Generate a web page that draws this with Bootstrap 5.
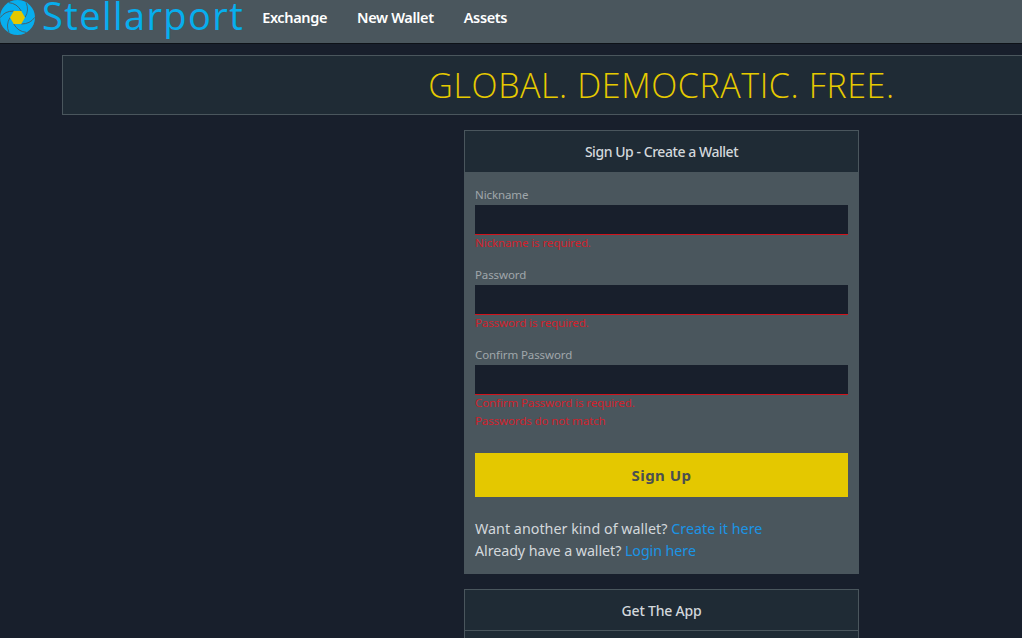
<!DOCTYPE html>
<html lang="en">
<head>
<meta charset="utf-8">
<title>Stellarport</title>
<link href="https://cdn.jsdelivr.net/npm/bootstrap@5.3.0/dist/css/bootstrap.min.css" rel="stylesheet">
<style>
html,body{overflow-x:hidden;}
body{background:#181f2c;font-family:"Noto Sans","Open Sans",sans-serif;color:#d3d8dc;font-size:15px;}
.sp-nav{height:44px;background:#4a565d;border-bottom:1px solid #0e1218;padding:0;align-items:flex-start;flex-wrap:nowrap;justify-content:flex-start;}
.sp-brand{display:flex;align-items:flex-start;color:#07aeee;font-family:"Open Sans",sans-serif;font-weight:500;font-size:38px;line-height:30px;padding:0;margin:0 18px 0 0;height:40px;letter-spacing:1.4px;}
.sp-brand:hover{color:#07aeee;}
.sp-brand svg{width:36px;height:36px;margin-right:6px;flex:none;}
.sp-links{gap:30px;margin-top:7px;}
.sp-links .nav-link{color:#fff;font-weight:600;font-size:14.5px;padding:0;letter-spacing:-.35px;}
.sp-wrap{width:1199px;margin:11px 0 0 62px;}
.sp-banner{height:60px;background:#1f2b35;border:1px solid #4a565d;border-radius:0;color:#e6ca00;font-size:34px;line-height:58px;letter-spacing:.6px;text-align:center;font-weight:300;font-family:"Open Sans",sans-serif;margin-bottom:15px;}
.sp-card{width:395px;background:#4a565d;border:0;border-radius:0;color:#d3d8dc;margin-bottom:15px;}
.sp-card .card-header{height:42px;background:#1f2b35;border:1px solid #4a565d;border-bottom:0;border-radius:0;padding:0;text-align:center;font-size:14px;font-weight:500;line-height:42px;color:#d3d8dc;letter-spacing:-.45px;}
.sp-app .card-header{border-bottom:1px solid #4a565d;letter-spacing:-.2px;}
.sp-card .card-body{padding:13px 11px 0;height:402px;}
.sp-label{display:block;font-size:11.5px;line-height:20px;color:#a0a7ab;margin:0;letter-spacing:-.1px;}
.sp-input{display:block;height:30px;background:#181f2c;border-width:0 0 1px;border-style:solid;border-color:#d0141c;border-radius:0;padding:0 8px;color:#fff;}
.sp-input:focus{background:#181f2c;box-shadow:none;border-color:#d0141c;color:#fff;}
.sp-err{font-size:11.5px;line-height:18px;margin-bottom:0;color:#d0222c;letter-spacing:-.1px;}
.sp-input + .sp-err{margin-top:-1px;}
.sp-field{margin-bottom:13px;min-height:67px;}
.sp-submit{display:block;width:100%;height:44px;margin-top:23px;background:#e4c800;border:0;border-radius:0;color:#4b4f50;font-weight:700;font-size:15px;letter-spacing:.5px;padding:0;}
.sp-submit:hover{background:#e4c800;color:#4b4f50;}
.sp-foot{margin:21px 0 0;font-size:14.3px;line-height:22px;letter-spacing:-.08px;}
.sp-foot-wide{letter-spacing:.02px;}
.sp-foot a{color:#1a94e6;text-decoration:none;}
.sp-app{background:#1f2b35;}
.sp-app .card-body{height:60px;border:1px solid #4a565d;border-top:0;background:#1f2b35;}
</style>
</head>
<body>
<nav class="navbar sp-nav">
  <a class="navbar-brand sp-brand" href="#">
    <svg viewBox="0 0 36 36" aria-hidden="true">
      <circle cx="17.5" cy="17.5" r="17.5" fill="#07aeee"/>
      <g fill="none" stroke="#4a565d" stroke-width=".8">
        <path d="M25 17.5Q29.5 10 26 2.5"/>
        <path d="M25 17.5Q29.5 10 26 2.5" transform="rotate(60 17.5 17.5)"/>
        <path d="M25 17.5Q29.5 10 26 2.5" transform="rotate(120 17.5 17.5)"/>
        <path d="M25 17.5Q29.5 10 26 2.5" transform="rotate(180 17.5 17.5)"/>
        <path d="M25 17.5Q29.5 10 26 2.5" transform="rotate(240 17.5 17.5)"/>
        <path d="M25 17.5Q29.5 10 26 2.5" transform="rotate(300 17.5 17.5)"/>
      </g>
      <polygon points="10,17.5 13.75,11 21.25,11 25,17.5 21.25,24 13.75,24" fill="#e4c800"/>
    </svg>
    <span>Stellarport</span>
  </a>
  <ul class="navbar-nav flex-row sp-links">
    <li class="nav-item"><a class="nav-link" href="#">Exchange</a></li>
    <li class="nav-item"><a class="nav-link" href="#">New Wallet</a></li>
    <li class="nav-item"><a class="nav-link" href="#">Assets</a></li>
  </ul>
</nav>
<main class="sp-wrap">
  <div class="sp-banner">GLOBAL. DEMOCRATIC. FREE.</div>
  <div class="card sp-card mx-auto">
    <div class="card-header">Sign Up - Create a Wallet</div>
    <div class="card-body">
      <form>
        <div class="sp-field">
          <label class="sp-label" for="n">Nickname</label>
          <input id="n" class="form-control sp-input" type="text">
          <div class="sp-err">Nickname is required.</div>
        </div>
        <div class="sp-field">
          <label class="sp-label" for="p">Password</label>
          <input id="p" class="form-control sp-input" type="password">
          <div class="sp-err">Password is required.</div>
        </div>
        <div class="sp-field">
          <label class="sp-label" for="c">Confirm Password</label>
          <input id="c" class="form-control sp-input" type="password">
          <div class="sp-err">Confirm Password is required.</div>
          <div class="sp-err">Passwords do not match</div>
        </div>
        <button type="button" class="btn sp-submit">Sign Up</button>
      </form>
      <div class="sp-foot"><div class="sp-foot-wide">Want another kind of wallet? <a href="#">Create it here</a></div><div>Already have a wallet? <a href="#">Login here</a></div></div>
    </div>
  </div>
  <div class="card sp-card sp-app mx-auto">
    <div class="card-header">Get The App</div>
    <div class="card-body"></div>
  </div>
</main>
<script src="https://cdn.jsdelivr.net/npm/bootstrap@5.3.0/dist/js/bootstrap.bundle.min.js"></script>
</body>
</html>
